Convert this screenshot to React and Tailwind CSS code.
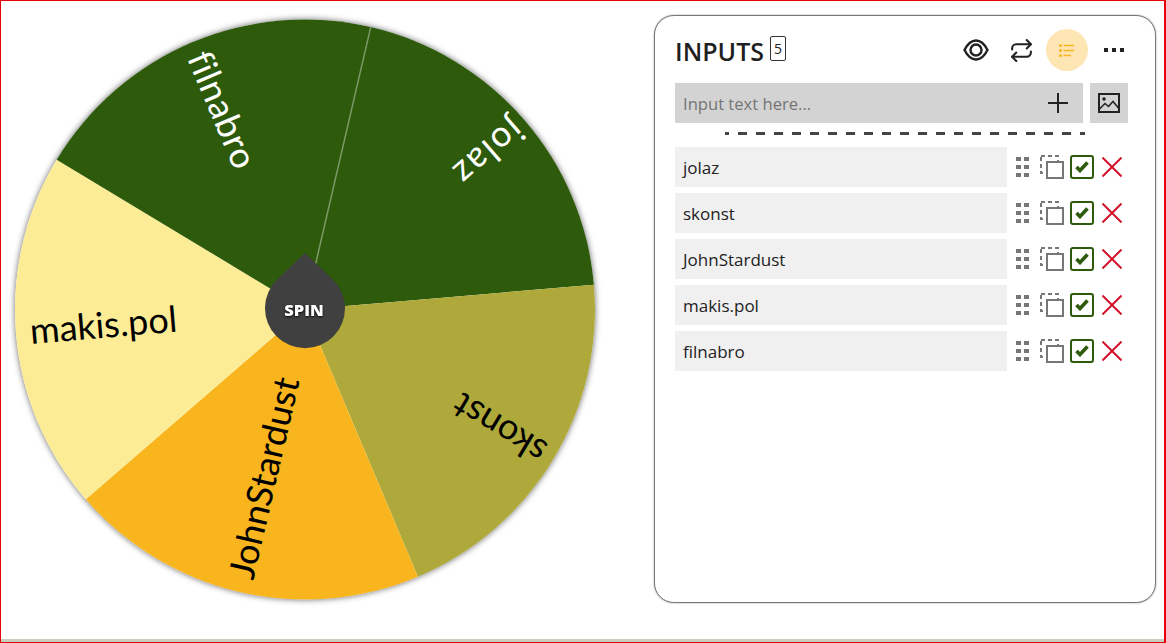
import { Repeat } from 'lucide-react';

const items = ['jolaz', 'skonst', 'JohnStardust', 'makis.pol', 'filnabro'];

const CENTER = [305, 309.5];
const RADIUS = 290;

const slices = [
  { from: -76.9, color: '#2d5a0b', label: 'jolaz', ink: '#ffffff', start: 282, spacing: 2 },
  { from: -4.9, color: '#aea93a', label: 'skonst', ink: '#000000', start: 279, spacing: 0 },
  { from: 67.1, color: '#f9b51e', label: 'JohnStardust', ink: '#000000', start: 276, spacing: 0 },
  { from: 139.1, color: '#fdec96', label: 'makis.pol', ink: '#000000', start: 276, spacing: 0 },
  { from: 211.1, color: '#2d5a0b', label: 'filnabro', ink: '#ffffff', start: 278, spacing: 0.4 },
];

function point(deg, r) {
  const rad = (deg * Math.PI) / 180;
  return [r * Math.cos(rad), r * Math.sin(rad)];
}

function slicePath(from) {
  const [x1, y1] = point(from, RADIUS);
  const [x2, y2] = point(from + 72, RADIUS);
  return `M0 0 L${x1} ${y1} A${RADIUS} ${RADIUS} 0 0 1 ${x2} ${y2} Z`;
}

function Wheel() {
  return (
    <svg viewBox="1 1 640 620" className="w-[640px] h-[620px] shrink-0">
      <g transform={`translate(${CENTER[0]} ${CENTER[1]})`}>
        <circle r={RADIUS} fill="#ffffff" style={{ filter: 'drop-shadow(0 0 3px rgba(0,0,0,0.6))' }} />
        {slices.map((s) => (
          <path key={s.label} d={slicePath(s.from)} fill={s.color} />
        ))}
        <line x1="0" y1="0" x2={point(-76.9, RADIUS)[0]} y2={point(-76.9, RADIUS)[1]} stroke="#7d9868" strokeWidth="1.5" />
        {slices.map((s) => (
          <text
            key={s.label}
            transform={`rotate(${s.from + 36 + 180}) translate(${-s.start} -3)`}
            fill={s.ink}
            dominantBaseline="central"
            fontFamily="Lato, sans-serif"
            fontSize="36"
            letterSpacing={s.spacing}
          >
            {s.label}
          </text>
        ))}
      </g>
      <path d="M305 253 L332.4 279 A40 40 0 1 1 277.6 279 Z" fill="#404040" />
      <text
        x="304"
        y="316"
        textAnchor="middle"
        fill="#ffffff"
        fontFamily="'Open Sans', sans-serif"
        fontWeight="800"
        fontSize="16.5"
        style={{ filter: 'drop-shadow(0 1px 1px rgba(0,0,0,0.9))' }}
      >
        SPIN
      </text>
    </svg>
  );
}

function EyeIcon() {
  return (
    <svg width="26" height="22" viewBox="0 0 26 22" fill="none" stroke="#222" strokeWidth="2.4">
      <path d="M1.5 11 C5 4 9 1.5 13 1.5 S21 4 24.5 11 C21 18 17 20.5 13 20.5 S5 18 1.5 11 Z" />
      <circle cx="13" cy="11" r="5.5" />
    </svg>
  );
}

function ListIcon() {
  return (
    <svg width="16" height="13" viewBox="0 0 16 13" fill="none" stroke="#f9b51e" strokeWidth="1.5">
      <path d="M4.5 1.5H15M4.5 6.5H15M4.5 11.5H12" />
      <g fill="#f9b51e" stroke="none">
        <circle cx="1.5" cy="1.5" r="1.5" />
        <circle cx="1.5" cy="6.5" r="1.5" />
        <circle cx="1.5" cy="11.5" r="1.5" />
      </g>
    </svg>
  );
}

function ImageIcon() {
  return (
    <svg width="22" height="20" viewBox="0 0 22 20" fill="none" stroke="#222" strokeWidth="2">
      <rect x="1" y="1" width="20" height="18" />
      <circle cx="6" cy="6" r="1.8" fill="#222" stroke="none" />
      <path d="M1.5 16 L7 10.5 L10.5 13.5 L15 8.5 L20.5 15" strokeWidth="1.6" />
    </svg>
  );
}

function GripIcon() {
  return (
    <div className="grid grid-cols-2 gap-x-[3.5px] gap-y-[3.5px] w-[13px]">
      {[0, 1, 2, 3, 4, 5].map((n) => (
        <span key={n} className="w-[4.5px] h-[4.5px] bg-[#777777]" />
      ))}
    </div>
  );
}

function CopyIcon() {
  return (
    <svg width="24" height="24" viewBox="0 0 24 24" fill="none" stroke="#777777" strokeWidth="2">
      <rect x="1" y="1" width="17" height="17" strokeDasharray="4 3" />
      <rect x="7" y="7" width="16" height="16" fill="#ffffff" />
    </svg>
  );
}

function CheckIcon() {
  return (
    <div className="w-[24px] h-[24px] rounded-[3px] border-2 border-[#2d5a0b] flex items-center justify-center">
      <svg width="14" height="12" viewBox="0 0 14 12" fill="none" stroke="#2d5a0b" strokeWidth="3.6">
        <path d="M1.5 6 L5 9.5 L12.5 1.5" />
      </svg>
    </div>
  );
}

function CrossIcon() {
  return (
    <svg width="20" height="20" viewBox="0 0 20 20" stroke="#d0102c" strokeWidth="2">
      <path d="M0.5 0.5 L19.5 19.5 M19.5 0.5 L0.5 19.5" />
    </svg>
  );
}

function Row({ label }) {
  return (
    <div className="flex items-center h-[40px]">
      <div className="w-[332px] h-full bg-[#f0f0f0] pl-[8px] pt-[1px] flex items-center text-[17px] text-[#222]">{label}</div>
      <div className="ml-[9px]"><GripIcon /></div>
      <div className="ml-[11px]"><CopyIcon /></div>
      <div className="ml-[6px]"><CheckIcon /></div>
      <div className="ml-[8px]"><CrossIcon /></div>
    </div>
  );
}

function Panel() {
  return (
    <div className="mt-[14px] ml-[13px] w-[502px] h-[588px] rounded-[20px] border border-[#777777] shadow-[0_0_2px_rgba(0,0,0,0.4)] pl-[20px] pr-[27px] pt-[13px] bg-white shrink-0" style={{ fontFamily: "'Open Sans', 'Noto Sans', sans-serif" }}>
      <div className="flex items-center h-[42px]">
        <h2 className="mt-[2px] text-[25px] font-semibold text-[#1f1f1f] leading-none">INPUTS</h2>
        <span className="ml-[6px] mt-[-4px] w-[16px] h-[25px] border border-[#333] rounded-[2px] flex items-center justify-center text-[14px] text-[#222]">5</span>
        <div className="ml-auto flex items-center">
          <EyeIcon />
          <Repeat size={25} strokeWidth={2} className="ml-[20px] text-[#222]" />
          <div className="ml-[12px] w-[42px] h-[42px] rounded-full bg-[#fde6b3] flex items-center justify-center">
            <ListIcon />
          </div>
          <div className="ml-[16px] mr-[4px] flex gap-[4px]">
            <span className="w-[4px] h-[4px] bg-[#222]" />
            <span className="w-[4px] h-[4px] bg-[#222]" />
            <span className="w-[4px] h-[4px] bg-[#222]" />
          </div>
        </div>
      </div>
      <div className="mt-[12px] flex gap-[7px]">
        <div className="w-[408px] h-[40px] bg-[#d3d3d3] pl-[8px] pr-[14px] flex items-center">
          <input placeholder="Input text here..." className="flex-1 pt-[2px] bg-transparent outline-none text-[16.6px] placeholder:text-[#757575]" />
          <svg width="22" height="22" viewBox="0 0 22 22" stroke="#222" strokeWidth="2">
            <path d="M11 1V21M1 11H21" />
          </svg>
        </div>
        <div className="w-[38px] h-[40px] bg-[#d3d3d3] flex items-center justify-center">
          <ImageIcon />
        </div>
      </div>
      <div className="mt-[9px] ml-[50px] w-[360px] h-[3px] bg-[linear-gradient(90deg,#444444_50%,transparent_50%)] bg-[length:18px_3px] bg-[position:-5px_0]" />
      <div className="mt-[12px] flex flex-col gap-[6px]">
        {items.map((label) => (
          <Row key={label} label={label} />
        ))}
      </div>
    </div>
  );
}

export default function App() {
  return (
    <div className="w-[1166px] h-[643px] bg-white border-t border-l border-b border-r-2 border-red-600 flex flex-col overflow-hidden">
      <div className="flex-1 flex items-start min-h-0">
        <Wheel />
        <Panel />
      </div>
      <div className="h-[3px] bg-[#c5cfc0]" />
    </div>
  );
}
